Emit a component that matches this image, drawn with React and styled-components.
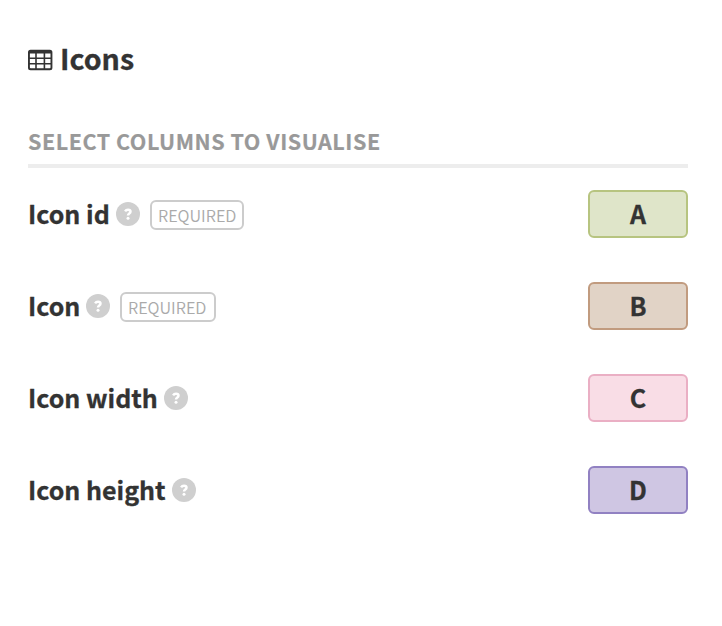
import React from "react";
import styled, { createGlobalStyle } from "styled-components";

const GlobalStyle = createGlobalStyle`
  * {
    box-sizing: border-box;
  }
  body {
    margin: 0;
    background-color: #fff;
    color: #333;
    font-family: "Noto Sans CJK SC", "Noto Sans", sans-serif;
  }
`;

const Container = styled.main`
  width: 722px;
  height: 626px;
  padding: 40px 34px 0 28px;
`;

const Title = styled.h1`
  display: flex;
  align-items: center;
  height: 40px;
  margin: 0;
  font-size: 28.6px;
  font-weight: 700;
  line-height: 36px;
  -webkit-text-stroke: 0.3px #333;
`;

const TitleText = styled.span`
  height: 40px;
`;

const TableIcon = styled.svg`
  width: 25px;
  height: 22px;
  margin-right: 7px;
`;

const SectionTitle = styled.h2`
  height: 44px;
  margin: 44px 0 22px;
  border-bottom: 4px solid #ededed;
  color: #999;
  font-size: 21.5px;
  font-weight: 700;
  letter-spacing: 0.53px;
  line-height: 34px;
  -webkit-text-stroke: 0.2px #999;
`;

const Row = styled.div`
  display: flex;
  align-items: center;
  height: 48px;
  margin-bottom: 44px;
`;

const Label = styled.span`
  width: ${(props) => props.$width}px;
  height: 48px;
  font-size: 25px;
  font-weight: 700;
  line-height: 46px;
  white-space: nowrap;
  -webkit-text-stroke: 0.3px #333;
`;

const Help = styled.svg`
  width: 24px;
  height: 24px;
  margin-left: 6px;
`;

const Required = styled.span`
  width: ${(props) => props.$width}px;
  height: 30px;
  margin: 2px 0 0 10px;
  padding-left: 6px;
  border: 2px solid #ccc;
  border-radius: 6px;
  color: #aaa;
  font-family: "Noto Sans CJK SC DemiLight", "Noto Sans CJK SC", sans-serif;
  font-size: 16.2px;
  font-weight: 350;
  line-height: 26px;
  white-space: nowrap;
`;

const Column = styled.button`
  width: 100px;
  height: 48px;
  margin-left: auto;
  padding: 0 0 2px;
  border: 2px solid ${(props) => props.$border};
  border-radius: 6px;
  background-color: ${(props) => props.$fill};
  color: #333;
  font: inherit;
  font-size: 25px;
  font-weight: 700;
  line-height: 42px;
  -webkit-text-stroke: 0.3px #333;
`;

const columns = [
  { label: "Icon id", width: 82, badge: 94, column: "A", fill: "#dfe5c9", border: "#b7c480" },
  { label: "Icon", width: 52, badge: 96, column: "B", fill: "#e1d3c6", border: "#c19b7f" },
  { label: "Icon width", width: 130, column: "C", fill: "#f9dde6", border: "#eaafc4" },
  { label: "Icon height", width: 138, column: "D", fill: "#cfc6e3", border: "#9181c2" },
];

const HelpIcon = () => (
  <Help viewBox="0 0 24 24">
    <circle cx="12" cy="12" r="12" fill="#cfcfcf" />
    <path
      d="M9.1 9.3C9.7 8.3 10.7 7.8 12 7.8c1.6 0 2.500.8 2.500 2 0 1.800-2.500 1.800-2.500 3.700"
      fill="none"
      stroke="#fff"
      strokeWidth="2.5"
    />
    <circle cx="12" cy="16.2" r="1.5" fill="#fff" />
  </Help>
);

const App = () => (
  <>
    <GlobalStyle />
    <Container>
      <Title>
        <TableIcon viewBox="0 0 25 22">
          <path
            fill="#333"
            fillRule="evenodd"
            d="M2.500 .8h19.400a2.500 2.500 0 0 1 2.500 2.500v15.400a2.500 2.500 0 0 1-2.500 2.500H2.500a2.500 2.500 0 0 1-2.500-2.500V3.300a2.500 2.500 0 0 1 2.500-2.500zM1.900 4.600v4h5.300v-4zM8.800 4.600v4h6.800v-4zM17.200 4.600v4h5.300v-4zM1.900 10v4h5.300v-4zM8.800 10v4h6.800v-4zM17.200 10v4h5.300v-4zM1.900 15.400v3.100a.8.8 0 0 0 .8.8h4.500v-3.900zM8.800 15.400v3.900h6.800v-3.900zM17.200 15.400v3.900h4.500a.8.8 0 0 0 .8-.8v-3.100z"
          />
        </TableIcon>
        <TitleText>Icons</TitleText>
      </Title>
      <SectionTitle>SELECT COLUMNS TO VISUALISE</SectionTitle>
      {columns.map((item) => (
        <Row key={item.column}>
          <Label $width={item.width}>{item.label}</Label>
          <HelpIcon />
          {item.badge && <Required $width={item.badge}>REQUIRED</Required>}
          <Column $fill={item.fill} $border={item.border}>
            {item.column}
          </Column>
        </Row>
      ))}
    </Container>
  </>
);

export default App;
